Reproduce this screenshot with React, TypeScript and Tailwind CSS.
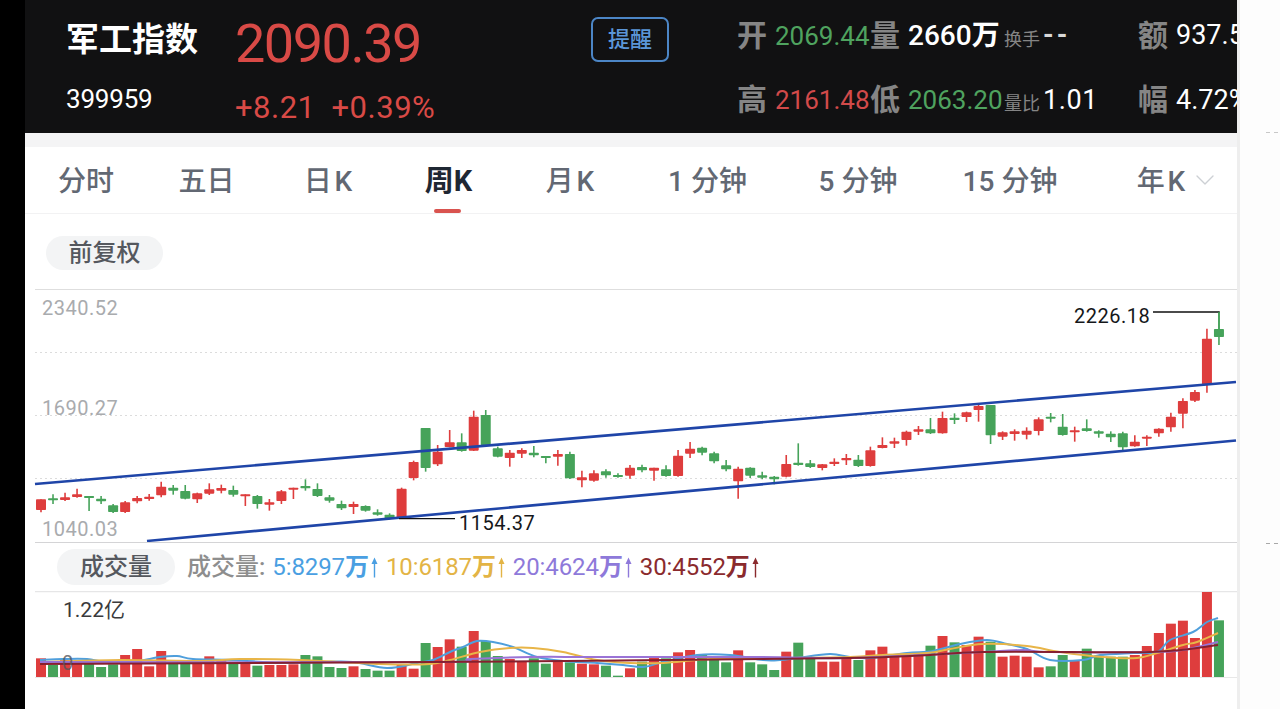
import { ChevronDown } from 'lucide-react';

const RED = '#de3d3d';
const GREEN = '#46a35a';

// candles were read off zoomed crops: [color, top, bottom, high, low], y = base + v / 3
const candleGroups: { base: number; rows: [string, number, number, number, number][] }[] = [
  {
    base: 400,
    rows: [
      ['r', 298, 330, 298, 337], ['g', 295, 300, 283, 312], ['r', 292, 300, 278, 303], ['r', 283, 291, 266, 293],
      ['g', 288, 292, 288, 333], ['g', 296, 304, 288, 312], ['g', 316, 336, 312, 339], ['r', 307, 336, 303, 339],
      ['r', 294, 304, 288, 310], ['r', 290, 297, 282, 302], ['r', 260, 286, 245, 292], ['g', 263, 272, 255, 284],
      ['g', 273, 296, 255, 298], ['r', 280, 298, 278, 309], ['r', 268, 281, 250, 285], ['r', 264, 272, 254, 280],
      ['g', 270, 284, 257, 290], ['r', 283, 288, 283, 318], ['g', 288, 312, 285, 326], ['r', 307, 314, 297, 332],
      ['r', 274, 303, 270, 312], ['r', 263, 268, 263, 297], ['g', 258, 265, 238, 272], ['g', 267, 288, 250, 291],
      ['g', 292, 302, 285, 308],
    ],
  },
  {
    base: 390,
    rows: [
      ['g', 342, 355, 332, 360], ['r', 342, 351, 335, 372], ['g', 348, 362, 346, 365], ['g', 367, 374, 358, 377],
      ['g', 374, 386, 370, 388], ['r', 296, 386, 293, 386], ['r', 216, 264, 212, 271], ['g', 114, 234, 114, 245],
      ['r', 185, 223, 165, 228], ['r', 157, 171, 120, 172], ['g', 157, 183, 130, 185], ['r', 80, 182, 62, 183],
      ['g', 75, 165, 60, 168], ['g', 175, 200, 170, 202], ['r', 188, 204, 180, 230], ['r', 180, 191, 175, 204],
      ['g', 188, 196, 168, 202], ['g', 198, 204, 198, 220], ['r', 192, 200, 180, 227], ['g', 192, 265, 185, 267],
      ['r', 262, 271, 242, 292], ['r', 250, 272, 241, 275], ['g', 244, 256, 238, 263], ['g', 255, 260, 250, 263],
      ['r', 233, 257, 225, 266], ['g', 231, 241, 224, 247], ['r', 233, 242, 233, 272],
    ],
  },
  {
    base: 390,
    rows: [
      ['g', 238, 258, 226, 260], ['r', 197, 258, 180, 260], ['r', 176, 191, 156, 204], ['g', 173, 188, 170, 196],
      ['g', 190, 214, 185, 220], ['g', 226, 238, 210, 244], ['r', 236, 274, 230, 326], ['g', 233, 257, 232, 264],
      ['g', 256, 263, 245, 268], ['g', 260, 268, 258, 283], ['r', 222, 260, 195, 262], ['g', 218, 225, 160, 227],
      ['g', 220, 231, 210, 234], ['r', 223, 234, 222, 241], ['r', 215, 222, 205, 228], ['r', 204, 211, 192, 225],
      ['g', 209, 228, 195, 231], ['r', 181, 228, 170, 230], ['r', 165, 174, 142, 175], ['r', 154, 161, 143, 174],
      ['r', 125, 150, 122, 167], ['r', 118, 125, 108, 135], ['g', 118, 130, 84, 132], ['r', 84, 130, 65, 131],
      ['g', 83, 90, 70, 102], ['r', 67, 81, 65, 96], ['r', 48, 60, 45, 95],
    ],
  },
  {
    base: 290,
    rows: [
      ['g', 345, 436, 345, 462], ['r', 427, 440, 424, 450], ['r', 424, 432, 418, 452], ['r', 422, 434, 412, 448],
      ['r', 388, 423, 382, 436], ['g', 380, 386, 369, 397], ['g', 410, 435, 372, 437], ['r', 421, 426, 410, 455],
      ['g', 415, 423, 388, 425], ['g', 424, 431, 421, 443], ['g', 431, 442, 424, 456], ['g', 430, 472, 425, 480],
      ['r', 455, 469, 436, 470], ['r', 440, 446, 436, 468], ['r', 416, 430, 415, 440], ['r', 380, 412, 368, 425],
      ['r', 333, 371, 325, 415], ['r', 306, 332, 300, 336], ['r', 146, 283, 116, 308], ['g', 117, 141, 65, 165],
    ],
  },
];

const candles = candleGroups.flatMap((g) =>
  g.rows.map(([c, top, bot, hi, lo]) => ({
    c,
    top: g.base + top / 3,
    bot: g.base + bot / 3,
    hi: g.base + hi / 3,
    lo: g.base + lo / 3,
  })),
);

// volume bars: color + top in crop units, y = 545 + v / 3
const volRaw =
  'r340 g360 r345 r352 g355 g366 g358 r330 r312 r364 r318 g352 g350 r345 r334 r345 g355 r356 g362 r360 r360 r358 g330 g334 g366 g369 r364 g372 g377 g377 r360 r371 g294 ' +
  'r306 r283 g305 r258 g288 g333 r342 r350 g340 g356 r346 g352 r356 r358 g362 g392 r370 g350 r335 g340 r322 r315 g330 g345 g352 r316 g352 g358 g375 r320 g293 g340 r350 r350 r342 ' +
  'g345 r316 r305 r330 r330 r325 g302 r273 g292 r300 r275 g290 r335 r332 r335 r367 g364 g330 r345 g311 g332 g335 g335 r330 r303 r264 r236 r227 r279 r141 g226';

const volumes = volRaw.split(' ').map((s) => ({ c: s[0], top: 545 + Number(s.slice(1)) / 3 }));

const xAt = (i: number) => 41 + i * 12.02;

const ma5: [number, number][] = [
  [40, 660], [63, 659], [87, 659], [107, 662], [137, 661], [160, 657], [177, 656], [193, 659], [233, 660], [280, 663],
  [320, 662], [353, 662], [387, 668], [417, 663], [433, 660], [450, 652], [463, 647], [477, 641], [493, 642], [513, 647],
  [537, 657], [563, 661], [597, 663], [623, 665], [643, 667], [663, 662], [697, 655], [730, 655], [763, 660], [780, 660],
  [797, 658], [830, 654], [850, 657], [870, 658], [907, 653], [933, 651], [960, 644], [987, 640], [1007, 644], [1027, 649],
  [1050, 660], [1083, 660], [1100, 655], [1133, 653], [1157, 652], [1170, 640], [1193, 632], [1207, 622], [1218, 618],
];
const ma10: [number, number][] = [
  [40, 662], [120, 660], [200, 661], [240, 659], [300, 660], [380, 664], [430, 664], [450, 660], [480, 652], [510, 648],
  [533, 648], [563, 652], [597, 660], [630, 663], [663, 663], [697, 660], [730, 658], [780, 658], [850, 657], [883, 655],
  [927, 653], [950, 649], [983, 644], [1027, 646], [1060, 652], [1103, 657], [1137, 658], [1157, 653], [1183, 645],
  [1197, 642], [1218, 633],
];
const ma20: [number, number][] = [
  [40, 662], [430, 662], [470, 659], [530, 657], [600, 657], [760, 657], [850, 658], [983, 652], [1023, 650], [1050, 652],
  [1150, 652], [1183, 650], [1218, 642],
];
const ma30: [number, number][] = [
  [40, 664], [430, 662], [850, 658], [983, 652], [1150, 652], [1218, 645],
];

// catmull-rom through the points so the averages come out smooth
function smooth(pts: [number, number][]) {
  let d = `M${pts[0][0]} ${pts[0][1]}`;
  for (let i = 0; i < pts.length - 1; i++) {
    const p0 = pts[Math.max(i - 1, 0)];
    const p1 = pts[i];
    const p2 = pts[i + 1];
    const p3 = pts[Math.min(i + 2, pts.length - 1)];
    const c1x = p1[0] + (p2[0] - p0[0]) / 6;
    const c1y = p1[1] + (p2[1] - p0[1]) / 6;
    const c2x = p2[0] - (p3[0] - p1[0]) / 6;
    const c2y = p2[1] - (p3[1] - p1[1]) / 6;
    d += ` C${c1x} ${c1y} ${c2x} ${c2y} ${p2[0]} ${p2[1]}`;
  }
  return d;
}

const tabs = [
  { label: '分时', w: 'w-[122px]' },
  { label: '五日', w: 'w-[119px]' },
  { label: '日\u200aK', w: 'w-[124px]' },
  { label: '周K', w: 'w-[117px]', active: true },
  { label: '月\u200aK', w: 'w-[126px]' },
  { label: '1 分钟', w: 'w-[149px]' },
  { label: '5 分钟', w: 'w-[152px]' },
  { label: '15 分钟', w: 'w-[152px]' },
  { label: '年\u200aK', w: 'w-[150px]', more: true },
];

function StatLabel({ children }: { children: string }) {
  return <span className="text-[30px] leading-none font-bold text-[#858585]">{children}</span>;
}

function StatValue({ children, className }: { children: string; className: string }) {
  return <span className={`leading-none whitespace-nowrap ${className}`}>{children}</span>;
}

function SmallLabel({ children }: { children: string }) {
  return <span className="pt-[8px] text-[18px] leading-none text-[#858585]">{children}</span>;
}

function Header() {
  return (
    <header className="h-[133px] shrink-0 bg-[#111112] flex overflow-hidden">
      <div className="w-[210px] shrink-0 pl-[41px] flex flex-col">
        <div className="h-[80px] flex items-center text-[33px] font-bold text-white">军工指数</div>
        <div className="mt-px text-[26px] leading-[36px] tracking-[-0.2px] text-white">399959</div>
      </div>
      <div className="w-[356px] shrink-0 flex flex-col">
        <div className="h-[86px] flex items-center text-[54px] tracking-[-1.5px] text-[#d94a46]">2090.39</div>
        <div className="flex gap-[16px] text-[31px] leading-[44px] tracking-[0.5px] text-[#d94a46]">
          <span>+8.21</span>
          <span>+0.39%</span>
        </div>
      </div>
      <div className="w-[146px] shrink-0 pt-[17px]">
        <div className="w-[78px] h-[45px] rounded-[7px] border-2 border-[#4c86c6] text-[#5b96d8] text-[22px] font-medium flex items-center justify-center">
          提醒
        </div>
      </div>
      <div className="grid grid-cols-[38px_95px_38px_96px_39px_95px_38px_120px] grid-rows-[71px_58px] items-center">
        <StatLabel>开</StatLabel>
        <StatValue className="text-[26px] text-[#4fa35f]">2069.44</StatValue>
        <StatLabel>量</StatLabel>
        <span className="text-[28px] leading-none font-medium text-white whitespace-nowrap">
          2660<span className="font-bold">万</span>
        </span>
        <SmallLabel>换手</SmallLabel>
        <StatValue className="text-[27px] font-bold tracking-[3px] text-[#d8d8d8]">--</StatValue>
        <StatLabel>额</StatLabel>
        <StatValue className="text-[27px] text-white">937.5</StatValue>
        <StatLabel>高</StatLabel>
        <StatValue className="text-[26px] text-[#d24a4a]">2161.48</StatValue>
        <StatLabel>低</StatLabel>
        <StatValue className="text-[26px] text-[#4fa35f]">2063.20</StatValue>
        <SmallLabel>量比</SmallLabel>
        <StatValue className="text-[27px] tracking-[0.6px] text-white">1.01</StatValue>
        <StatLabel>幅</StatLabel>
        <StatValue className="text-[27px] text-white">4.72%</StatValue>
      </div>
    </header>
  );
}

function Tabs() {
  return (
    <nav className="h-[67px] shrink-0 flex items-center border-b border-[#f2f2f3] bg-white">
      {tabs.map((t) => (
        <div
          key={t.label}
          className={`relative h-full pt-[4px] flex items-center justify-center whitespace-pre ${t.w} ${
            t.active ? 'text-[29px] text-[#1f2733] font-bold' : 'text-[28px] font-medium text-[#626873]'
          }`}
        >
          {t.label}
          {t.active && <span className="absolute bottom-0 left-[44px] w-[27px] h-[4px] rounded-full bg-[#d9534f]" />}
          {t.more && <ChevronDown className="absolute left-[103px] top-[17px] w-[32px] h-[32px] text-[#cdd0d4]" strokeWidth={1} />}
        </div>
      ))}
    </nav>
  );
}

function AxisLabel({ className, children }: { className: string; children: string }) {
  return <span className={`absolute text-[20px] leading-[24px] tracking-[0.5px] ${className}`}>{children}</span>;
}

function PriceChart() {
  return (
    <div className="relative h-[254px] shrink-0">
      <svg width="1212" height="254" viewBox="25 289 1212 254" className="block">
        <line x1="35" x2="1237" y1="289.5" y2="289.5" stroke="#dedede" />
        {[352, 415, 478].map((y) => (
          <line key={y} x1="35" x2="1237" y1={y + 0.5} y2={y + 0.5} stroke="#dcdcdc" strokeDasharray="2 3" />
        ))}
        {candles.map((k, i) => {
          const x = xAt(i);
          const fill = k.c === 'r' ? RED : GREEN;
          return (
            <g key={i}>
              <line x1={x} x2={x} y1={k.hi} y2={k.lo} stroke={fill} strokeWidth="1.6" />
              <rect x={x - 5} y={k.top} width="10" height={Math.max(k.bot - k.top, 2)} rx="0.8" fill={fill} />
            </g>
          );
        })}
        <line x1="35" y1="484" x2="1236" y2="382" stroke="#1f45a8" strokeWidth="2.7" />
        <line x1="147" y1="541" x2="1236" y2="440.5" stroke="#1f45a8" strokeWidth="2.7" />
        <polyline points="1153,312 1219,312 1219,313" fill="none" stroke="#111" strokeWidth="1.4" />
        <line x1="1219" x2="1219" y1="312" y2="330" stroke={GREEN} strokeWidth="1.6" />
        <line x1="399" x2="455" y1="518.6" y2="518.6" stroke="#111" strokeWidth="1.4" />
        <line x1="35" x2="1237" y1="542.5" y2="542.5" stroke="#d4d4d6" />
      </svg>
      <AxisLabel className="left-[17px] top-[7px] text-[#a9abae]">2340.52</AxisLabel>
      <AxisLabel className="left-[17px] top-[107px] text-[#a9abae]">1690.27</AxisLabel>
      <AxisLabel className="left-[17px] top-[228px] text-[#a9abae]">1040.03</AxisLabel>
      <AxisLabel className="left-[1049px] top-[15px] text-[#15171a]">2226.18</AxisLabel>
      <AxisLabel className="left-[434px] top-[222px] text-[#15171a]">1154.37</AxisLabel>
    </div>
  );
}

function UpArrow({ color }: { color: string }) {
  return (
    <svg width="7" height="21" viewBox="0 0 7 21" className="mx-[2px]">
      <path d="M3.5 0.5 L6.5 7 L4.2 7 L4.2 20.5 L2.8 20.5 L2.8 7 L0.5 7 Z" fill={color} />
    </svg>
  );
}

const legend = [
  { text: '5:8297', color: '#4a9fe2', cls: 'text-[#4a9fe2]' },
  { text: '10:6187', color: '#e3b445', cls: 'text-[#e3b445]' },
  { text: '20:4624', color: '#8e79da', cls: 'text-[#8e79da]' },
  { text: '30:4552', color: '#8a2a2d', cls: 'text-[#8a2a2d]' },
];

function VolumeHeader() {
  return (
    <div className="h-[48px] shrink-0 flex items-center pl-[32px]">
      <div className="w-[118px] h-[36px] rounded-full bg-[#f3f4f5] flex items-center justify-center text-[24px] font-medium text-[#55585e]">
        成交量
      </div>
      <span className="ml-[12px] text-[24px] font-medium text-[#8e8e8e]">成交量:</span>
      <div className="ml-[7px] flex items-center gap-[6px]">
        {legend.map((l) => (
          <div key={l.text} className={`flex items-center text-[24px] tracking-[-0.1px] ${l.cls}`}>
            <span className="whitespace-nowrap">{l.text}</span>
            <span className="font-bold">万</span>
            <UpArrow color={l.color} />
          </div>
        ))}
      </div>
    </div>
  );
}

function VolumeChart() {
  return (
    <div className="relative flex-1">
      <svg width="1212" height="118" viewBox="25 591 1212 118" className="block">
        <line x1="35" x2="1237" y1="591.5" y2="591.5" stroke="#e6e6e7" strokeWidth="1.5" />
        <line x1="35" x2="1237" y1="677.5" y2="677.5" stroke="#e8e8e8" />
        {volumes.map((v, i) => (
          <rect key={i} x={xAt(i) - 5} y={v.top} width="10" height={677 - v.top} fill={v.c === 'r' ? RED : GREEN} />
        ))}
        <path d={smooth(ma5)} fill="none" stroke="#4f9fdc" strokeWidth="2" />
        <path d={smooth(ma10)} fill="none" stroke="#e8b548" strokeWidth="2" />
        <path d={smooth(ma20)} fill="none" stroke="#9a73d6" strokeWidth="2" />
        <path d={smooth(ma30)} fill="none" stroke="#86202f" strokeWidth="2" />
      </svg>
      <span className="absolute left-[38px] top-[7px] text-[21px] leading-[24px] text-[#3a3a3c]">1.22亿</span>
      <span className="absolute left-[37px] top-[60px] text-[20px] leading-[24px] text-[#55555a]/80">0</span>
    </div>
  );
}

export default function App() {
  return (
    <div className="w-[1280px] h-[709px] flex bg-white overflow-hidden font-[family-name:Roboto,'Noto_Sans_CJK_SC',sans-serif]">
      <div className="w-[25px] shrink-0 bg-black" />
      <main className="w-[1212px] shrink-0 flex flex-col">
        <Header />
        <div className="h-[14px] shrink-0 bg-[#f4f4f5]" />
        <Tabs />
        <div className="h-[75px] shrink-0 pl-[21px] pt-[22px]">
          <div className="w-[117px] h-[34px] rounded-full bg-[#f3f4f5] flex items-center justify-center text-[24px] font-medium text-[#55585e]">
            前复权
          </div>
        </div>
        <PriceChart />
        <VolumeHeader />
        <VolumeChart />
      </main>
      <aside className="relative flex-1 border-l-[3px] border-[#eeeeee] bg-[#fdfdfd]">
        <span className="absolute right-0 top-[132px] w-[14px] h-px bg-[repeating-linear-gradient(90deg,#c8c8c8_0_4px,transparent_4px_8px)]" />
        <span className="absolute right-0 top-[543px] w-[14px] h-px bg-[repeating-linear-gradient(90deg,#a8a8a8_0_4px,transparent_4px_8px)]" />
      </aside>
    </div>
  );
}
